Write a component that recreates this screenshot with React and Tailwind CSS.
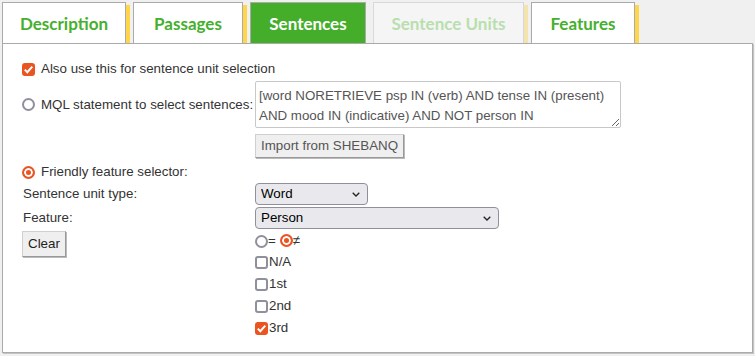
import React, { useState } from "react";

const tabs = [
  { label: "Description", w: "w-[124px]", state: "normal" },
  { label: "Passages", w: "w-[110px]", state: "normal" },
  { label: "Sentences", w: "w-[116px]", state: "active" },
  { label: "Sentence Units", w: "w-[151px]", state: "disabled" },
  { label: "Features", w: "w-[104px]", state: "normal" },
];

const tabStyles = {
  normal: "bg-white border-[#aaa] text-[#45b02d] shadow-[4px_3px_0_#ffd54a]",
  active: "bg-[#44ae2b] border-[#aaa] text-white",
  disabled: "bg-[#f5f5f5] border-[#d8d8d8] text-[#b9dfae] shadow-[4px_3px_0_#f5e3ad]",
};

const mql =
  "[word NORETRIEVE psp IN (verb) AND tense IN (present) AND mood IN (indicative) AND NOT person IN (third_person)]";

function Check({ checked, onChange, gap, children }) {
  return (
    <label className={"flex items-center " + gap}>
      <span className="relative flex h-[13px] w-[13px] shrink-0">
        <input
          type="checkbox"
          checked={checked}
          onChange={onChange}
          className="m-0 h-[13px] w-[13px] appearance-none rounded-[3px] border-2 border-[#8f8f9d] bg-white checked:border-[#e95420] checked:bg-[#e95420]"
        />
        {checked && (
          <svg className="pointer-events-none absolute inset-0" viewBox="0 0 13 13">
            <path d="M2.8 6.6 5.3 9.2 10.3 3.6" stroke="#fff" strokeWidth="2" fill="none" />
          </svg>
        )}
      </span>
      {children}
    </label>
  );
}

function Radio({ checked, onChange }) {
  return (
    <input
      type="radio"
      checked={checked}
      onChange={onChange}
      className="m-0 h-[13px] w-[13px] shrink-0 appearance-none rounded-full border-2 border-[#8f8f9d] bg-white checked:border-[#e95420] checked:bg-[#e95420] checked:shadow-[inset_0_0_0_2px_#fff]"
    />
  );
}

function Select({ value, options, w }) {
  return (
    <div className={"relative " + w}>
      <select
        defaultValue={value}
        className="h-[22px] w-full appearance-none rounded-[4px] border border-[#8f8f9d] bg-[#e9e9ed] pl-[5px] text-[13.33px] text-black"
      >
        {options.map((o) => (
          <option key={o}>{o}</option>
        ))}
      </select>
      <svg className="pointer-events-none absolute right-[8px] top-[9px]" width="8" height="5" viewBox="0 0 8 5">
        <path d="M0.7 0.7 4 4 7.3 0.7" stroke="#222" strokeWidth="1.3" fill="none" />
      </svg>
    </div>
  );
}

export default function App() {
  const [alsoUnits, setAlsoUnits] = useState(true);
  const [mode, setMode] = useState("friendly");
  const [notEqual, setNotEqual] = useState(true);
  const [persons, setPersons] = useState({ "N/A": false, "1st": false, "2nd": false, "3rd": true });

  return (
    <div className="h-[356px] w-full bg-[#f0f0f0] font-['Liberation_Sans',Arial,sans-serif]">
      <div className="flex items-end gap-[7px] pl-[2px] pt-[2px]">
        {tabs.map((t) => (
          <button
            key={t.label}
            className={
              "h-[41px] border border-b-0 pt-[2px] font-['Lato',sans-serif] text-[17px] font-bold " +
              t.w +
              " " +
              tabStyles[t.state]
            }
          >
            {t.label}
          </button>
        ))}
      </div>

      <div className="relative ml-[2px] h-[310px] w-[751px] border border-[#aaa] bg-white pl-[19px] pt-[15px] text-[13.33px] text-[#333] shadow-[1px_1px_0_#c4c4c4]">
        <Check checked={alsoUnits} onChange={() => setAlsoUnits(!alsoUnits)} gap="h-[20px] gap-[6px]">
          Also use this for sentence unit selection
        </Check>

        <div className="mt-[2px] flex">
          <label className="flex w-[233px] items-center gap-[6px]">
            <Radio checked={mode === "mql"} onChange={() => setMode("mql")} />
            MQL statement to select sentences:
          </label>
          <textarea
            readOnly
            defaultValue={mql}
            className="h-[47px] w-[366px] overflow-hidden rounded-[2px] border border-[#c8c8c8] px-[3px] pt-[4px] text-[13.33px] leading-[20px] text-[#555]"
          />
        </div>

        <button className="ml-[233px] mt-[6px] h-[24px] border border-[#d0d0d0] border-b-[#999] border-r-[#999] bg-[#efefef] px-[5px] text-[13.33px] text-[#555] shadow-[1px_1px_0_#bbb]">
          Import from SHEBANQ
        </button>

        <label className="mt-[4px] flex h-[20px] items-center gap-[6px]">
          <Radio checked={mode === "friendly"} onChange={() => setMode("friendly")} />
          Friendly feature selector:
        </label>

        <div className="mt-[1px] flex h-[22px] items-center">
          <span className="w-[233px] pl-[1px]">Sentence unit type:</span>
          <Select value="Word" options={["Word", "Phrase", "Clause"]} w="w-[113px]" />
        </div>

        <div className="mt-[2px] flex h-[22px] items-center">
          <span className="w-[233px] pl-[1px]">Feature:</span>
          <Select value="Person" options={["Person", "Gender", "Number"]} w="w-[244px]" />
        </div>

        <div className="mt-[2px] flex">
          <div className="w-[233px]">
            <button className="h-[26px] border border-[#d0d0d0] border-b-[#999] border-r-[#999] bg-[#efefef] px-[5px] text-[13.33px] text-[#222] shadow-[1px_1px_0_#bbb]">
              Clear
            </button>
          </div>
          <div className="flex flex-col">
            <div className="flex h-[20px] items-center">
              <Radio checked={!notEqual} onChange={() => setNotEqual(false)} />
              <span>=</span>
              <span className="ml-[4px] flex items-center">
                <Radio checked={notEqual} onChange={() => setNotEqual(true)} />
                <span>≠</span>
              </span>
            </div>
            {Object.keys(persons).map((p) => (
              <Check
                key={p}
                checked={persons[p]}
                onChange={() => setPersons({ ...persons, [p]: !persons[p] })}
                gap="h-[22px] gap-[1px]"
              >
                {p}
              </Check>
            ))}
          </div>
        </div>
      </div>
    </div>
  );
}
